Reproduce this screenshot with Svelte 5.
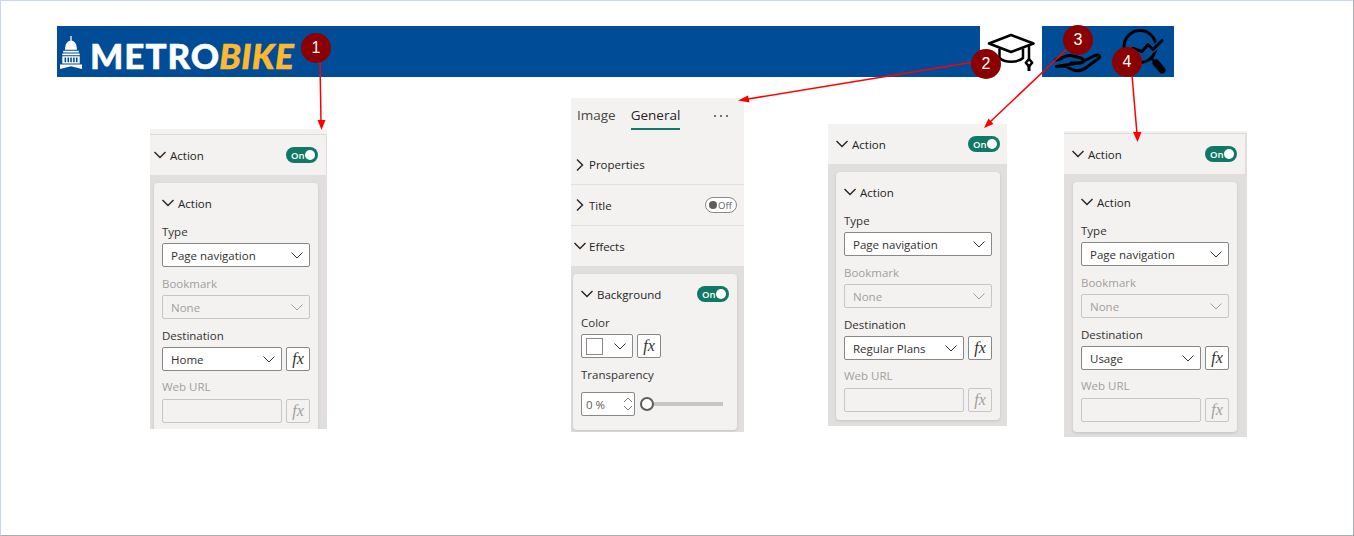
<script>
  const panels = [
    { cls: 'p1', dest: 'Home' },
    { cls: 'p3', dest: 'Regular Plans' },
    { cls: 'p4', dest: 'Usage' }
  ];
  const markers = [
    { n: 1, x: 316, y: 48 },
    { n: 2, x: 986, y: 64 },
    { n: 3, x: 1078, y: 40 },
    { n: 4, x: 1127, y: 62 }
  ];
</script>

{#snippet chev(dir)}
  <svg class="chev" width="12" height="12" viewBox="0 0 12 12">
    {#if dir === 'down'}
      <path d="M.5 3 6 8.500 11.500 3" />
    {:else}
      <path d="M3 .5 8.500 6 3 11.500" />
    {/if}
  </svg>
{/snippet}

{#snippet selectArrow()}
  <svg class="sel-arrow" width="12" height="7" viewBox="0 0 12 7"><path d="M.5.5 6 6 11.500.5" /></svg>
{/snippet}

{#snippet toggle()}
  <span class="toggle"><span class="toggle-label">On</span><span class="knob"></span></span>
{/snippet}

{#snippet fx(off)}
  <span class="fx" class:off><i>fx</i></span>
{/snippet}

{#snippet actionPanel(p)}
  <section class="panel {p.cls}">
    <header class="head">
      <span class="title">{@render chev('down')}Action</span>
      {@render toggle()}
    </header>
    <div class="card">
      <div class="card-title">{@render chev('down')}Action</div>
      <div class="label">Type</div>
      <div class="select"><span>Page navigation</span>{@render selectArrow()}</div>
      <div class="label off">Bookmark</div>
      <div class="select off"><span>None</span>{@render selectArrow()}</div>
      <div class="label">Destination</div>
      <div class="row">
        <div class="select grow"><span>{p.dest}</span>{@render selectArrow()}</div>
        {@render fx(false)}
      </div>
      <div class="label off url">Web URL</div>
      <div class="row">
        <div class="select grow off"></div>
        {@render fx(true)}
      </div>
    </div>
  </section>
{/snippet}

<main class="page">
  <div class="banner">
    <div class="logo">
      <svg class="capitol" width="22" height="33" viewBox="0 0 24 36">
        <path fill="#fff" d="M11.300 0h1.400v5h-1.400zM5.500 15c0-6 2.500-10 6.500-10s6.500 4 6.500 10zM3.500 16h17v2h-17zM2.500 19h19v2h-19z" />
        <path fill="#fff" d="M2.500 22h19v8h-19zM0 31h24v5l-12-3-12 3z" />
        <path fill="#004c97" d="M5 23.500h1.700v5H5zM8.200 23.500h1.700v5H8.200zM11.200 23.500h1.700v5h-1.700zM14.300 23.500H16v5h-1.700zM17.400 23.500h1.700v5h-1.700z" />
      </svg>
      <span class="metro">METRO</span><span class="bike">BIKE</span>
    </div>
    <div class="tabs">
      <div class="icon-tab active">
        <svg width="48" height="40" viewBox="0 0 48 40" fill="none" stroke="#000" stroke-width="2.500" stroke-linejoin="round">
          <path d="M2 11.500 24 3 46.500 11.500 24 20z" />
          <path d="M12.500 16.500V26c5 5 18.500 5 23.500 0v-9.500" />
          <path d="M42 13v14" />
          <path d="M42 27l3.200 3.800L42 34.500l-3.200-3.700z" />
          <path d="M42 34v5" stroke-width="3" />
        </svg>
      </div>
      <div class="icon-tab">
        <svg width="48" height="22" viewBox="0 0 48 22" fill="none" stroke="#000" stroke-width="3" stroke-linejoin="round" stroke-linecap="round">
          <path d="M1.500 8C8 8 10 2.500 17 3.500l10 2.500c3 1 3 4.500 0 5H17" />
          <path d="M27 10.500l14-7c4-1.500 6 .5 4 2.500L33 15c-5 4-11 4.500-16 2l-6-3-8.500.5z" />
        </svg>
      </div>
      <div class="icon-tab">
        <svg width="58" height="50" viewBox="0 0 58 50" fill="none" stroke="#000" stroke-width="3" stroke-linejoin="round" stroke-linecap="round">
          <circle cx="28" cy="19.500" r="16" />
          <path d="M14 31l7-9.500 9 3 6-7 5 5 9-9" stroke="#004c97" stroke-width="6" />
          <path d="M21 21.500l9 3 6-7 5 5 9-9" />
          <path d="M39 31l3 3" />
          <path d="M44 36l6 7" stroke-width="7" />
        </svg>
      </div>
    </div>
  </div>

  {#each panels as p}
    {@render actionPanel(p)}
  {/each}

  <section class="panel p2">
    <div class="tabbar">
      <span class="tab">Image</span>
      <span class="tab current">General</span>
      <span class="dots"><i></i><i></i><i></i></span>
    </div>
    <div class="group first">{@render chev('right')}<b>Properties</b></div>
    <div class="group">{@render chev('right')}<b>Title</b>
      <span class="toggle-off"><span class="knob-off"></span>Off</span>
    </div>
    <div class="group last">{@render chev('down')}<b>Effects</b></div>
    <div class="gutter">
      <div class="card bg-card">
        <div class="card-title between">
          <span class="inline">{@render chev('down')}Background</span>
          {@render toggle()}
        </div>
        <div class="label">Color</div>
        <div class="row">
          <div class="select color"><span class="swatch"></span>{@render selectArrow()}</div>
          {@render fx(false)}
        </div>
        <div class="label t">Transparency</div>
        <div class="row slider-row">
          <div class="spin"><span>0 %</span>
            <svg width="10" height="16" viewBox="0 0 10 16" fill="none" stroke="#777"><path d="M1 6 5 2l4 4M1 10l4 4 4-4" /></svg>
          </div>
          <div class="slider"><span class="thumb"></span></div>
        </div>
      </div>
    </div>
  </section>

  <svg class="arrows" width="1354" height="536" viewBox="0 0 1354 536">
    <g stroke="#f00" stroke-width="1.500" fill="none">
      <path d="M320 62 321 122" />
      <path d="M974 62 748 99" />
      <path d="M1066 50 990 122" />
      <path d="M1132 75 1137 134" />
    </g>
    <g fill="#f00">
      <path d="M321.500 130 317.500 120h8z" />
      <path d="M738 100.500 748 95.500l1.500 7z" />
      <path d="M984 128 988.500 118.500l5 5.500z" />
      <path d="M1137.500 142 1133 132h8.500z" />
    </g>
  </svg>

  {#each markers as m}
    <span class="marker" style="left:{m.x - 15}px;top:{m.y - 15}px">{m.n}</span>
  {/each}
  <span class="tick"></span>
</main>

<style>
  :global(body) { margin: 0; background: #fff; }
  .page {
    position: relative;
    width: 1354px;
    height: 536px;
    box-sizing: border-box;
    overflow: hidden;
    border: 1px solid #c9d6e6;
    border-right-color: #a9adb8;
    border-bottom-color: #a9adb8;
    font-family: "Open Sans", "Noto Sans", sans-serif;
    font-size: 11.500px;
    color: #323130;
  }
  .tick { position: absolute; left: 675px; bottom: -1px; width: 4px; height: 1px; background: #333; }
  .banner {
    position: absolute;
    left: 56px;
    top: 25px;
    width: 1117px;
    height: 51px;
    background: #004c97;
    display: flex;
    justify-content: space-between;
  }
  .logo { display: flex; align-items: center; padding-left: 3px; }
  .capitol { margin-right: 8px; margin-top: 1px; flex: none; }
  .metro, .bike {
    font-family: Lato, sans-serif;
    font-weight: 900;
    font-size: 35px;
    line-height: 1;
    margin-top: 8px;
    -webkit-text-stroke: .5px currentColor;
  }
  .metro { color: #fff; letter-spacing: 1px; }
  .bike { color: #fdb92e; font-style: italic; letter-spacing: .4px; margin-left: -1px; }
  .tabs { display: flex; }
  .icon-tab { width: 62px; height: 51px; display: flex; align-items: center; justify-content: center; }
  .icon-tab.active { background: #fff; }
  .icon-tab:nth-child(2) {
    width: 66px;
    align-items: flex-end;
    justify-content: flex-start;
    padding: 0 0 3px 12px;
    box-sizing: border-box;
  }
  .icon-tab:nth-child(3) { width: 66px; }

  .panel {
    position: absolute;
    background: #e1dfdd;
    box-sizing: border-box;
    overflow: hidden;
  }
  .p1 { left: 149px; top: 128px; width: 177px; height: 300px; padding: 5px 1px 0 0; background: linear-gradient(#f3f2f1 5px, #e1dfdd 5px); }
  .p3 { left: 827px; top: 123px; width: 179px; height: 302px; }
  .p4 { left: 1063px; top: 130px; width: 183px; height: 306px; padding: 2px 2px 0 0; background: linear-gradient(#f3f2f1 2px, #e1dfdd 2px); }
  .head {
    height: 41px;
    background: #f3f2f1;
    border-top: 1px solid #dcdad8;
    box-sizing: border-box;
    display: flex;
    align-items: center;
    justify-content: space-between;
    padding: 0 8px 0 4px;
    font-weight: 500;
    color: #252423;
  }
  .p3 .head { height: 40px; padding: 0 7px 0 8px; border-top: 0; }
  .p4 .head { padding: 0 8px 0 8px; }
  .title, .inline { display: inline-flex; align-items: center; gap: 4px; }
  .chev { flex: none; fill: none; stroke: #252423; stroke-width: 1.400; }
  .card {
    background: #f3f2f1;
    border-radius: 4px;
    box-shadow: 0 1px 3px rgba(0, 0, 0, .13);
    box-sizing: border-box;
    width: 164px;
    margin: 8px 0 0 4px;
    padding: 12px 8px 0;
    height: 260px;
  }
  .p3 .card { margin-left: 8px; height: 248px; }
  .p4 .card { margin-left: 9px; height: 250px; }
  .card-title {
    display: flex;
    align-items: center;
    gap: 4px;
    height: 16px;
    font-weight: 500;
    color: #252423;
    margin-bottom: 13px;
  }
  .between { justify-content: space-between; }
  .label { height: 16px; line-height: 16px; margin-bottom: 3px; }
  .label.off { color: #a19f9d; margin-top: 9px; }
  .label.url { margin-top: 8px; margin-bottom: 4px; }
  .card .label:not(.off):not(:nth-child(2)) { margin-top: 9px; }
  .select {
    height: 24px;
    box-sizing: border-box;
    border: 1px solid #8a8886;
    border-radius: 2px;
    background: #fff;
    display: flex;
    align-items: center;
    justify-content: space-between;
    padding: 0 6px 0 8px;
  }
  .select.off { background: #f3f2f1; border-color: #c8c6c4; color: #a19f9d; }
  .sel-arrow { fill: none; stroke: #323130; flex: none; }
  .select.off .sel-arrow { stroke: #a19f9d; }
  .row { display: flex; gap: 4px; align-items: center; }
  .grow { flex: 1; }
  .fx {
    width: 24px;
    height: 24px;
    box-sizing: border-box;
    border: 1px solid #8a8886;
    border-radius: 2px;
    background: #fff;
    display: flex;
    align-items: center;
    justify-content: center;
    font-family: "Liberation Serif", serif;
    font-size: 16px;
    flex: none;
  }
  .fx.off { background: #f3f2f1; border-color: #c8c6c4; color: #a19f9d; }
  .toggle {
    width: 32px;
    height: 16px;
    border-radius: 8px;
    background: #117865;
    color: #fff;
    display: inline-flex;
    align-items: center;
    justify-content: space-between;
    padding: 0 3px 0 5px;
    box-sizing: border-box;
    font-size: 9.500px;
    font-weight: 600;
    flex: none;
  }
  .knob { width: 10px; height: 10px; border-radius: 50%; background: #fff; }

  .p2 { left: 570px; top: 97px; width: 173px; height: 334px; background: #f3f2f1; display: flex; flex-direction: column; }
  .tabbar { height: 40px; flex: none; position: relative; padding: 7px 6px 0; display: flex; gap: 15px; font-size: 13.500px; box-sizing: border-box; }
  .tab { color: #484644; height: 24px; line-height: 20px; box-sizing: border-box; }
  .tab.current { color: #252423; border-bottom: 2px solid #117865; height: 25px; font-weight: 500; }
  .dots { position: absolute; left: 143px; top: 17px; display: flex; gap: 4px; }
  .dots i { width: 2px; height: 2px; background: #484644; border-radius: 50%; }
  .group {
    height: 41px;
    flex: none;
    display: flex;
    align-items: center;
    gap: 3px;
    padding: 0 7px 0 3px;
    border-bottom: 1px solid #e1dfdd;
    box-sizing: border-box;
  }
  .group b { font-weight: 500; color: #252423; }
  .group.first { height: 47px; padding-top: 7px; }
  .group.last { height: 40px; border-bottom: 0; }
  .toggle-off {
    margin-left: auto;
    width: 32px;
    height: 16px;
    box-sizing: border-box;
    border: 1px solid #8a8886;
    border-radius: 8px;
    background: #fff;
    display: flex;
    align-items: center;
    gap: 1px;
    padding-left: 3px;
    font-size: 9.500px;
    color: #605e5c;
  }
  .knob-off { width: 8px; height: 8px; border-radius: 50%; background: #605e5c; }
  .gutter { flex: 1; background: #e1dfdd; padding: 8px 7px 2px 2px; }
  .bg-card { height: 156px; margin: 0; }
  .bg-card .label.t { margin-top: 9px; margin-bottom: 9px; }
  .color { width: 52px; padding: 0 6px 0 4px; }
  .swatch { width: 15px; height: 15px; border: 1px solid #8a8886; background: #fff; }
  .spin {
    width: 54px;
    height: 24px;
    box-sizing: border-box;
    border: 1px solid #8a8886;
    border-radius: 2px;
    background: #fff;
    display: flex;
    align-items: center;
    justify-content: space-between;
    padding: 0 1px 0 4px;
    color: #605e5c;
  }
  .slider-row { gap: 5px; }
  .slider {
    position: relative;
    width: 83px;
    height: 4px;
    background: #c8c6c4;
  }
  .thumb {
    position: absolute;
    left: 0;
    top: -5px;
    width: 14px;
    height: 14px;
    box-sizing: border-box;
    border: 2px solid #605e5c;
    border-radius: 50%;
    background: #fff;
  }
  .arrows { position: absolute; left: -1px; top: -1px; pointer-events: none; }
  .marker {
    position: absolute;
    margin: -1px 0 0 -1px;
    width: 30px;
    height: 30px;
    border-radius: 50%;
    background: #8b0000;
    color: #fff;
    font-family: "Liberation Sans", sans-serif;
    font-size: 16px;
    line-height: 30px;
    text-align: center;
  }
</style>
